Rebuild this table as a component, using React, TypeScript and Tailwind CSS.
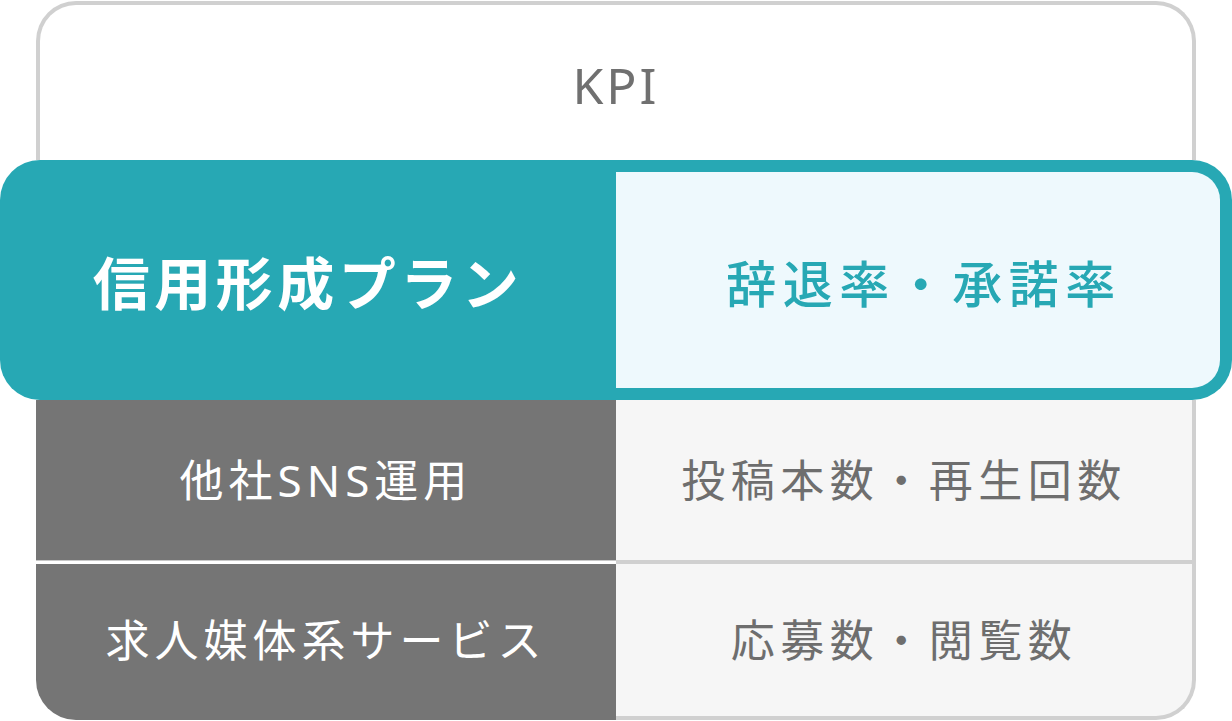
import React from 'react';

const rows = [
  { label: '他社SNS運用', kpi: '投稿本数・再生回数' },
  { label: '求人媒体系サービス', kpi: '応募数・閲覧数' },
];

const App = () => {
  return (
    <div className="w-[1232px] h-[721px] bg-white pt-px font-['Noto_Sans','Noto_Sans_CJK_JP',sans-serif]">
      {/* header */}
      <div className="ml-[36px] w-[1160px] h-[159px] border-[4px] border-b-0 border-[#d0d0d0] rounded-t-[40px] flex items-center justify-center">
        <span className="text-[50px] tracking-[3px] text-[#707070] leading-none pt-1">KPI</span>
      </div>

      {/* highlighted plan */}
      <div className="flex w-[1232px] h-[240px]">
        <div className="w-[616px] bg-[#27a8b4] rounded-l-[40px] flex items-center justify-center">
          <span className="text-[57px] font-bold tracking-[4.5px] text-white pt-2">
            信用形成プラン
          </span>
        </div>
        <div className="flex-1 border-[12px] border-l-0 border-[#27a8b4] bg-[#eef9fd] rounded-r-[40px] flex items-center justify-center pl-3">
          <span className="text-[50px] font-medium tracking-[6.5px] text-[#27a8b4] pt-2">
            辞退率・承諾率
          </span>
        </div>
      </div>

      {/* other services */}
      <div className="ml-[36px] w-[1160px] flex flex-col">
        {rows.map((row, i) => (
          <div key={row.label} className="flex flex-col">
            {i > 0 && (
              <div className="flex h-[4px]">
                <div className="w-[580px] bg-white border-t border-[#c8c8c8]" />
                <div className="flex-1 bg-[#d0d0d0]" />
              </div>
            )}
            <div className={i === 0 ? 'flex h-[160px]' : 'flex h-[156px]'}>
              <div
                className={
                  i === rows.length - 1
                    ? 'w-[580px] bg-[#757575] rounded-bl-[40px] flex items-center justify-center pb-1'
                    : 'w-[580px] bg-[#757575] flex items-center justify-center'
                }
              >
                <span className="text-[44px] tracking-[5px] text-white">
                  {row.label}
                </span>
              </div>
              <div
                className={
                  i === rows.length - 1
                    ? 'flex-1 bg-[#f6f6f6] border-r-[4px] border-b-[4px] border-[#d0d0d0] rounded-br-[40px] flex items-center justify-center'
                    : 'flex-1 bg-[#f6f6f6] border-r-[4px] border-[#d0d0d0] flex items-center justify-center'
                }
              >
                <span className="text-[44px] tracking-[5.5px] text-[#6e6e6e]">
                  {row.kpi}
                </span>
              </div>
            </div>
          </div>
        ))}
      </div>
    </div>
  );
};

export default App;
